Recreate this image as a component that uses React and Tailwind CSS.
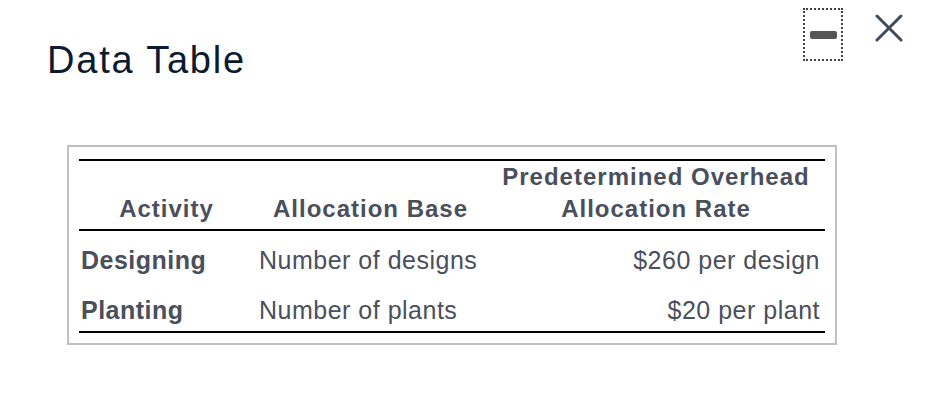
import React from "react";

const rows = [
  { activity: "Designing", base: "Number of designs", rate: "$260 per design" },
  { activity: "Planting", base: "Number of plants", rate: "$20 per plant" },
];

const App = () => {
  return (
    <div className="w-[931px] h-[420px] bg-white font-['Liberation_Sans',Arial,sans-serif]">
      {/* Header */}
      <div className="flex justify-between items-start">
        <h1 className="ml-[47px] mt-[40px] text-[38px] leading-[40px] tracking-[1.8px] text-[#0e1a30]">
          Data Table
        </h1>
        <div className="flex items-start mt-[8px] mr-[28px] gap-[32px]">
          <div className="w-[40px] h-[53px] border-2 border-dotted border-[#444] flex items-center justify-center">
            <div className="w-[27px] h-[8px] rounded-[2px] bg-[#555]" />
          </div>
          <svg width="28" height="28" viewBox="0 0 28 28" className="mt-[6px]">
            <path d="M2 2L26 26M26 2L2 26" stroke="#3f4b58" strokeWidth="3" strokeLinecap="round" />
          </svg>
        </div>
      </div>

      {/* Table box */}
      <div className="ml-[67px] mt-[65px] w-[770px] border-2 border-[#c0c0c0] pt-[12px] pb-[10px] px-[10px]">
        <div className="border-t-2 border-b-2 border-black text-[#4a4f5b] text-[25px] tracking-[0.5px]">
          <div className="grid grid-cols-[175px_233px_1fr] h-[70px] border-b-2 border-black items-end font-bold text-[24px] leading-[32px] pb-[4px] tracking-[1px]">
            <div className="text-center">Activity</div>
            <div className="text-center pt-[2px]">Allocation Base</div>
            <div className="text-center">
              Predetermined Overhead
              <br />
              Allocation Rate
            </div>
          </div>
          {rows.map((row) => (
            <div key={row.activity} className="grid grid-cols-[175px_233px_1fr] h-[50px] pt-[15px] leading-[28px]">
              <div className="pl-[2px] font-bold">{row.activity}</div>
              <div className="pl-[5px]">{row.base}</div>
              <div className="text-right pr-[5px]">{row.rate}</div>
            </div>
          ))}
        </div>
      </div>
    </div>
  );
};

export default App;
